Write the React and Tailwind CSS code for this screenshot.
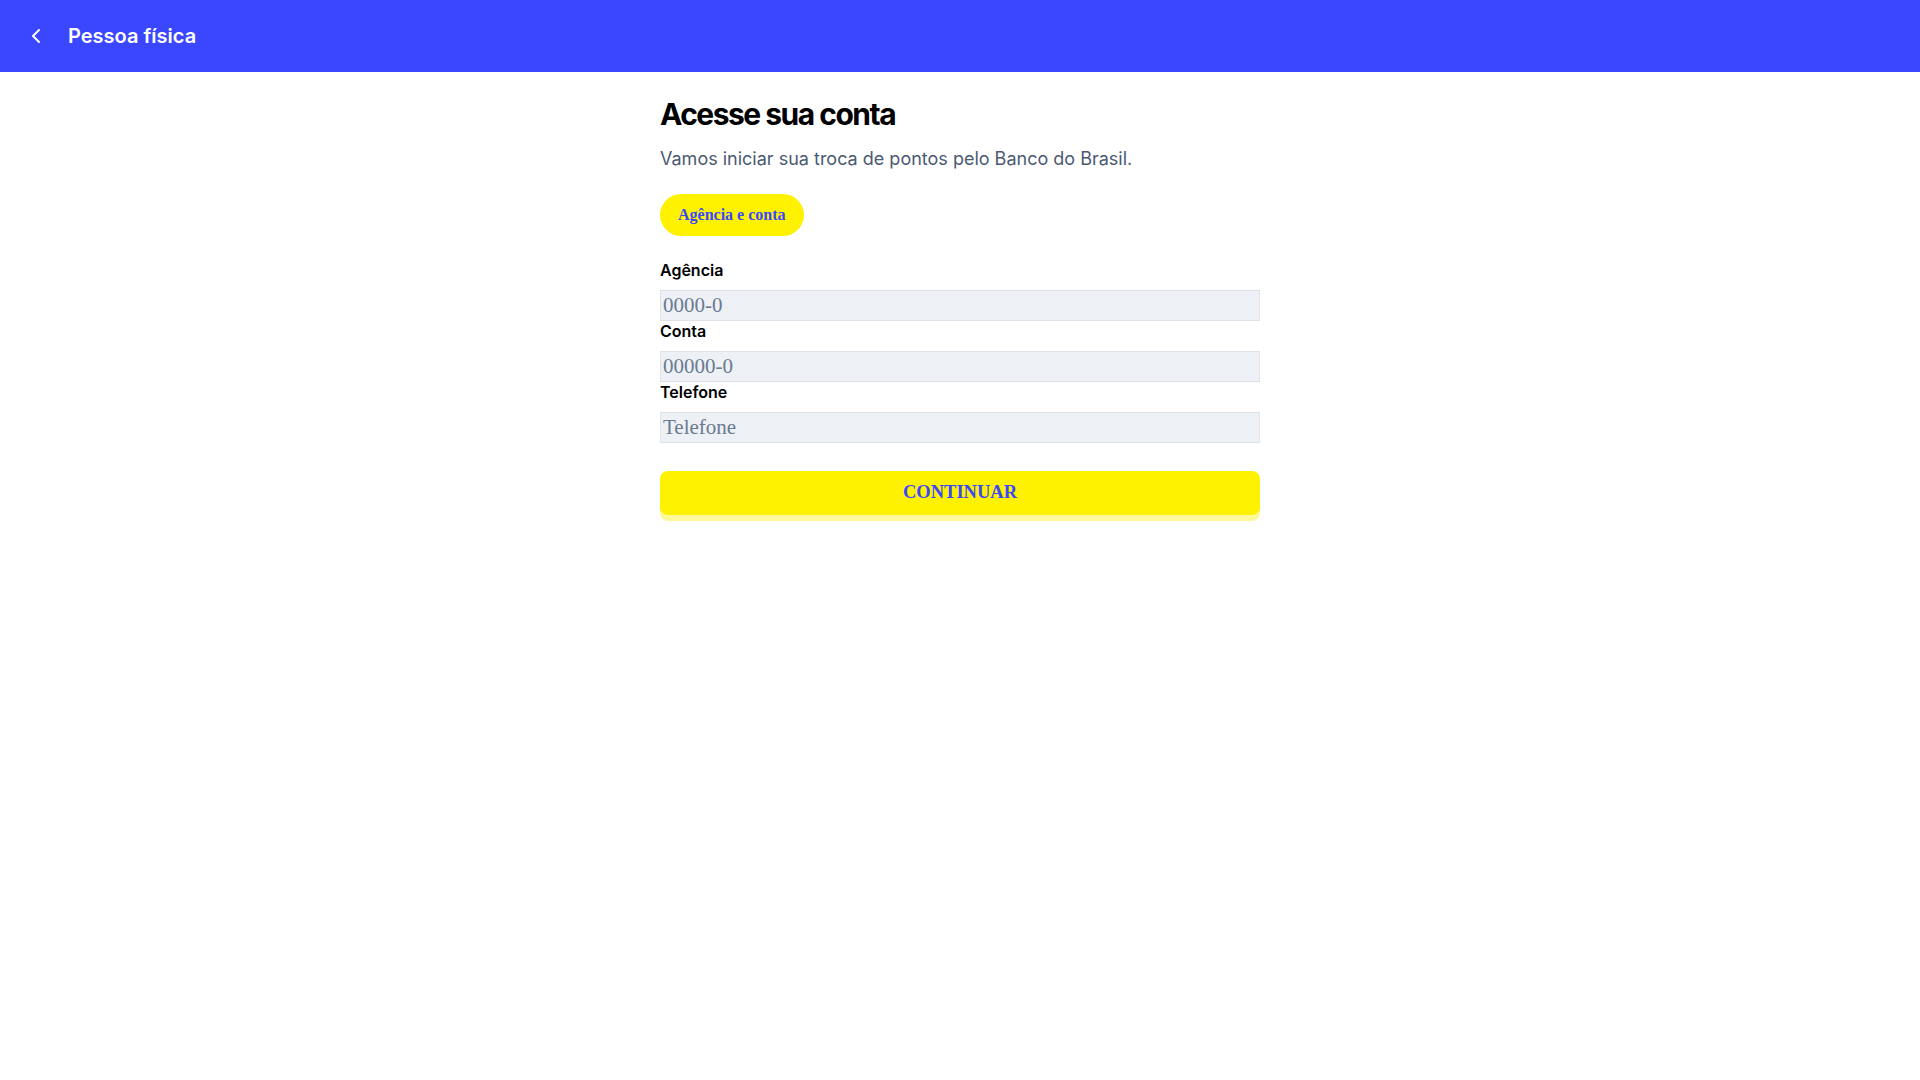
import { ChevronLeft } from 'lucide-react';

const fields = [
  { id: 'agencia', label: 'Agência', placeholder: '0000-0' },
  { id: 'conta', label: 'Conta', placeholder: '00000-0' },
  { id: 'telefone', label: 'Telefone', placeholder: 'Telefone' },
];

const App = () => {
  return (
    <div className="min-h-screen bg-white font-['Inter',sans-serif]">
      <header className="h-[72px] bg-[#3a47ff] flex items-center px-6 gap-5 text-white">
        <button className="flex items-center" aria-label="Voltar">
          <ChevronLeft className="w-6 h-6" strokeWidth={2} />
        </button>
        <h1 className="text-xl font-semibold">Pessoa física</h1>
      </header>

      <main className="w-[600px] mx-auto pt-6">
        <h2 className="text-3xl font-bold tracking-tighter text-black">Acesse sua conta</h2>
        <p className="mt-[13px] text-lg text-[#4b5a72]">
          Vamos iniciar sua troca de pontos pelo Banco do Brasil.
        </p>

        <div className="mt-[21px] flex">
          <button className="h-[42px] px-[18px] rounded-full bg-[#fff200] text-[#3a47ff] text-base font-bold font-['Liberation_Serif',serif]">
            Agência e conta
          </button>
        </div>

        <form className="mt-6" onSubmit={(e) => e.preventDefault()}>
          {fields.map((f) => (
            <div key={f.id}>
              <label htmlFor={f.id} className="block text-base leading-5 font-semibold text-black mb-2.5">
                {f.label}
              </label>
              <input
                id={f.id}
                type="text"
                placeholder={f.placeholder}
                className="block w-full h-[31px] px-[2px] bg-[#edf1f6] border border-[#dde2e9] text-[21px] font-['Liberation_Serif',serif] placeholder:text-[#6b7a90] outline-none"
              />
            </div>
          ))}

          <button
            type="submit"
            className="mt-7 w-full h-[44px] rounded-lg bg-[#fff200] shadow-[0_6px_0_#fff79c] text-[#3a47ff] text-[18.5px] font-bold font-['Liberation_Serif',serif]"
          >
            CONTINUAR
          </button>
        </form>
      </main>
    </div>
  );
};

export default App;
